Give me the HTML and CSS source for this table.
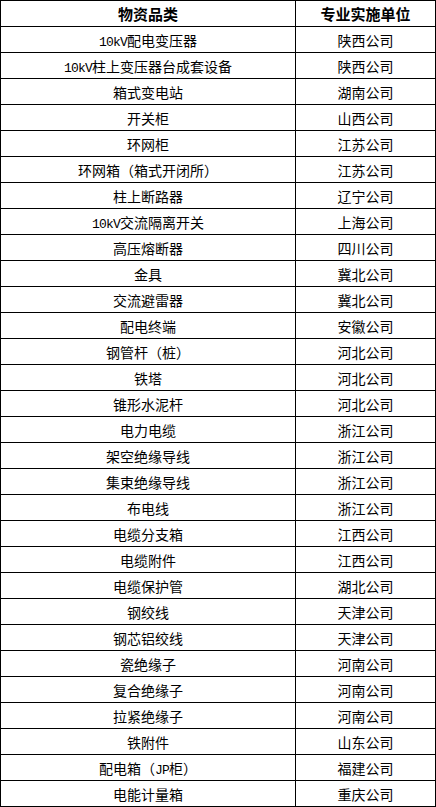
FILE: index.html
```html
<!DOCTYPE html>
<html lang="zh">
<head>
<meta charset="utf-8">
<title>物资品类</title>
<link rel="stylesheet" href="styles.css">
</head>
<body>
<div class="table">
  <div class="cell head">物资品类</div><div class="cell head">专业实施单位</div>
  <div class="cell"><span class="lat">10kV</span>配电变压器</div><div class="cell">陕西公司</div>
  <div class="cell"><span class="lat">10kV</span>柱上变压器台成套设备</div><div class="cell">陕西公司</div>
  <div class="cell">箱式变电站</div><div class="cell">湖南公司</div>
  <div class="cell">开关柜</div><div class="cell">山西公司</div>
  <div class="cell">环网柜</div><div class="cell">江苏公司</div>
  <div class="cell">环网箱（箱式开闭所）</div><div class="cell">江苏公司</div>
  <div class="cell">柱上断路器</div><div class="cell">辽宁公司</div>
  <div class="cell"><span class="lat">10kV</span>交流隔离开关</div><div class="cell">上海公司</div>
  <div class="cell">高压熔断器</div><div class="cell">四川公司</div>
  <div class="cell">金具</div><div class="cell">冀北公司</div>
  <div class="cell">交流避雷器</div><div class="cell">冀北公司</div>
  <div class="cell">配电终端</div><div class="cell">安徽公司</div>
  <div class="cell">钢管杆（桩）</div><div class="cell">河北公司</div>
  <div class="cell">铁塔</div><div class="cell">河北公司</div>
  <div class="cell">锥形水泥杆</div><div class="cell">河北公司</div>
  <div class="cell">电力电缆</div><div class="cell">浙江公司</div>
  <div class="cell">架空绝缘导线</div><div class="cell">浙江公司</div>
  <div class="cell">集束绝缘导线</div><div class="cell">浙江公司</div>
  <div class="cell">布电线</div><div class="cell">浙江公司</div>
  <div class="cell">电缆分支箱</div><div class="cell">江西公司</div>
  <div class="cell">电缆附件</div><div class="cell">江西公司</div>
  <div class="cell">电缆保护管</div><div class="cell">湖北公司</div>
  <div class="cell">钢绞线</div><div class="cell">天津公司</div>
  <div class="cell">钢芯铝绞线</div><div class="cell">天津公司</div>
  <div class="cell">瓷绝缘子</div><div class="cell">河南公司</div>
  <div class="cell">复合绝缘子</div><div class="cell">河南公司</div>
  <div class="cell">拉紧绝缘子</div><div class="cell">河南公司</div>
  <div class="cell">铁附件</div><div class="cell">山东公司</div>
  <div class="cell">配电箱（<span class="lat">JP</span>柜）</div><div class="cell">福建公司</div>
  <div class="cell">电能计量箱</div><div class="cell">重庆公司</div>
</div>
</body>
</html>
```

FILE: styles.css
```css
html, body {
  margin: 0;
  padding: 0;
  background: #ffffff;
}

.table {
  display: grid;
  grid-template-columns: 295px 140px;
  grid-auto-rows: 26px;
  width: 435px;
  border-left: 1px solid #000;
  border-top: 1px solid #000;
  font-family: "Noto Sans CJK SC", "Noto Sans", sans-serif;
  font-size: 14px;
  color: #000;
}

.cell {
  box-sizing: border-box;
  border-right: 1px solid #000;
  border-bottom: 1px solid #000;
  text-align: center;
  line-height: 27px;
  height: 26px;
  overflow: hidden;
  white-space: nowrap;
}

.head {
  font-weight: bold;
  font-size: 15px;
  line-height: 26px;
}

.lat {
  font-family: "Liberation Mono", "DejaVu Sans Mono", monospace;
  font-size: 13px;
  letter-spacing: -0.8px;
}
```
